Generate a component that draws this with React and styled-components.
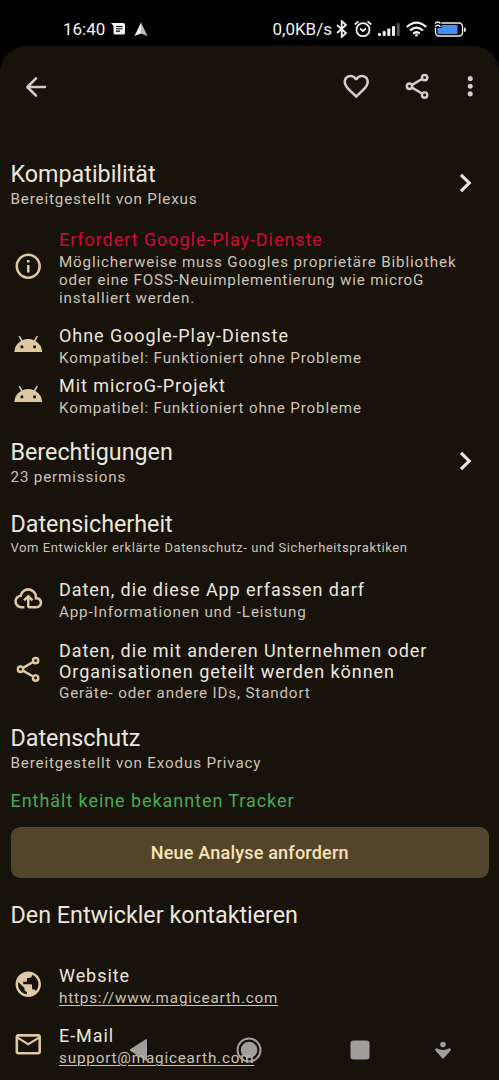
import React from 'react';
import styled, {createGlobalStyle} from 'styled-components';
import {
  MdAndroid,
  MdFavoriteBorder,
  MdInfoOutline,
  MdMailOutline,
  MdMoreVert,
  MdPublic,
} from 'react-icons/md';

const GlobalStyle = createGlobalStyle`
  body {
    margin: 0;
    background: #000;
    font-family: Roboto, 'Noto Sans', sans-serif;
  }
`;

const Screen = styled.div`
  position: relative;
  width: 499px;
  height: 1080px;
  overflow: hidden;
  background: #000;
`;

const StatusBar = styled.header`
  display: flex;
  align-items: center;
  justify-content: space-between;
  box-sizing: border-box;
  height: 46px;
  padding: 12px 32px 0 63px;
  color: #f2f2f2;
  font-size: 17px;
  line-height: 20px;
`;

const StatusGroup = styled.div`
  display: flex;
  align-items: center;
`;

const StatusText = styled.span`
  width: ${props => props.width}px;
  white-space: nowrap;
`;

const StatusIcon = styled.svg`
  display: block;
  margin-left: ${props => props.gap}px;
`;

const Sheet = styled.main`
  height: 1034px;
  border-radius: 26px 26px 0 0;
  background: #17130a;
  color: #ece6dc;
`;

const AppBar = styled.div`
  display: flex;
  align-items: center;
  height: 81px;
  padding: 0 13.5px 0 20.5px;
  color: #d8ccbe;
`;

const IconButton = styled.span`
  display: flex;
  margin-left: ${props => props.gap || 0}px;
`;

const Spacer = styled.div`
  flex: 1;
`;

const Content = styled.div`
  padding: 33px 10px 0 10.5px;
`;

const Section = styled.section`
  margin-bottom: ${props => props.gap}px;
`;

const SectionHeader = styled.div`
  display: flex;
  align-items: center;
  justify-content: space-between;
  padding-right: 16px;
`;

const SectionTitle = styled.h2`
  margin: 0;
  font-size: 23.3px;
  font-weight: 400;
  line-height: 28px;
  white-space: nowrap;
`;

const SectionSubtitle = styled.div`
  margin-top: 2px;
  color: #cdc3b6;
  font-size: ${props => (props.small ? 13 : 15.2)}px;
  line-height: ${props => (props.small ? 16 : 18)}px;
  letter-spacing: ${props => (props.small ? 0.58 : 0.84)}px;
  white-space: nowrap;
`;

const Row = styled.div`
  display: flex;
  align-items: center;
  margin-top: ${props => props.gap}px;
`;

const RowIcon = styled.div`
  display: flex;
  width: 31px;
  margin: 0 15.5px 3px 2px;
  color: #dfc8a4;
`;

const RowTitle = styled.div`
  color: ${props => props.color || 'inherit'};
  font-size: 18px;
  line-height: ${props => (props.multiline ? 21 : 22)}px;
  letter-spacing: 0.94px;
  white-space: pre;
`;

const RowText = styled.div`
  margin-top: 2px;
  color: #cdc3b6;
  font-size: 15.2px;
  line-height: 18px;
  letter-spacing: 0.84px;
  text-decoration: ${props => (props.link ? 'underline' : 'none')};
  text-decoration-thickness: 1px;
  text-underline-offset: 1.5px;
  white-space: pre;
`;

const TonalButton = styled.button`
  display: block;
  width: 100%;
  height: 51px;
  margin-top: 15px;
  padding: 0;
  border: 0;
  border-radius: 9px;
  background: #53452a;
  color: #f9e2b8;
  font-family: inherit;
  font-size: 18px;
  font-weight: 500;
  letter-spacing: 0.2px;
`;

const NavigationBar = styled.nav`
  position: absolute;
  left: 0;
  right: 0;
  bottom: 0;
  display: flex;
  align-items: center;
  height: 60px;
  padding-left: 129px;
  color: #b4b2ae;
  opacity: 0.88;
`;

const NavIcon = styled.svg`
  display: block;
  margin-right: ${props => props.gap}px;
`;

function BackArrow() {
  return (
    <svg width="30" height="30" viewBox="0 0 30 30" fill="none" stroke="currentColor" strokeWidth="2.6" strokeLinecap="round" strokeLinejoin="round">
      <path d="M24 15H7M15 6.3L6.3 15L15 23.7" />
    </svg>
  );
}

function ShareIcon() {
  return (
    <svg width="30.5" height="30.5" viewBox="0 0 24 24" fill="none" stroke="currentColor" strokeWidth="1.9">
      <circle cx="17.8" cy="5.2" r="2.1" />
      <circle cx="5.9" cy="12" r="2.1" />
      <circle cx="17.8" cy="18.9" r="2.1" />
      <path d="M7.9 10.9L15.8 6.3M7.9 13.1L15.8 17.7" />
    </svg>
  );
}

function CloudIcon() {
  return (
    <svg width="30.5" height="30.5" viewBox="0 -960 960 960" fill="currentColor">
      <path d="M260-160q-91 0-155.500-63T40-377q0-78 47-139t123-78q25-92 100-149t170-57q117 0 198.500 81.500T760-520q69 8 114.500 59.500T920-340q0 75-52.500 127.500T740-160H520q-33 0-56.500-23.500T440-240v-206l-64 62-56-56 160-160 160 160-56 56-64-62v206h220q42 0 71-29t29-71q0-42-29-71t-71-29h-60v-80q0-83-58.500-141.500T480-720q-83 0-141.500 58.500T280-520h-20q-58 0-99 41t-41 99q0 58 41 99t99 41h100v80H260Z" />
    </svg>
  );
}

function Chevron() {
  return (
    <svg width="14" height="23" viewBox="0 0 14 23" fill="none" stroke="currentColor" strokeWidth="3.1">
      <path d="M2 1.8L10.2 10L2 18.2" />
    </svg>
  );
}

function StatusIcons() {
  return (
    <>
      <StatusIcon gap={5} width="12" height="18" viewBox="0 0 12 18" fill="none" stroke="currentColor" strokeWidth="1.8">
        <path d="M1 5L10 13L5.7 17V1L10 5L1 13" />
      </StatusIcon>
      <StatusIcon gap={6} width="18" height="18" viewBox="0 0 18 18" fill="none" stroke="currentColor" strokeWidth="1.8">
        <circle cx="9" cy="9.7" r="6.5" />
        <path d="M.8 4.5L4.5 1.4M17.200 4.5L13.5 1.4M6 8.5L9 11L12 8.5" />
      </StatusIcon>
      <StatusIcon gap={6} width="22" height="18" viewBox="0 0 22 18" fill="currentColor">
        <rect x="0" y="13" width="3" height="3" rx="1" />
        <rect x="4.7" y="11" width="3" height="5" rx="1" />
        <rect x="9.3" y="8.5" width="3" height="7.5" rx="1" />
        <rect x="14" y="6" width="3" height="10" rx="1" />
        <rect x="18.7" y="3" width="3" height="13" rx="1" opacity="0.35" />
      </StatusIcon>
      <StatusIcon gap={6} width="21" height="18" viewBox="0 0 21 18" fill="none" stroke="currentColor" strokeWidth="2.3">
        <path d="M.8 7Q10.5-1.8 20.200 7M4 10.5Q10.5 4.7 17 10.5M7.2 13.6Q10.5 10.8 13.8 13.6" />
        <circle cx="10.5" cy="15.2" r="1.3" fill="currentColor" stroke="none" />
      </StatusIcon>
      <StatusIcon gap={7} width="33" height="18" viewBox="0 0 33 18">
        <rect x="1.5" y="3" width="27" height="13" rx="3.5" fill="none" stroke="currentColor" strokeWidth="1.4" />
        <rect x="3.5" y="5" width="20" height="9" rx="1" fill="#3f8ff5" />
        <path d="M30 7.5Q32 7.5 32 9.7Q32 12 30 12Z" fill="currentColor" />
        <path d="M0 0H7.500V8H0Z" fill="#000" />
        <path d="M1 3.500Q3.700 .5 6.500 3.500M1 6.800Q3.700 3.800 6.500 6.800" fill="none" stroke="currentColor" strokeWidth="1.5" />
      </StatusIcon>
    </>
  );
}

const InfoRow = ({icon, title, text, gap, color, multiline, link}) => (
  <Row gap={gap}>
    <RowIcon>{icon}</RowIcon>
    <div>
      <RowTitle color={color} multiline={multiline}>
        {title}
      </RowTitle>
      <RowText link={link}>{text}</RowText>
    </div>
  </Row>
);

const App = () => (
  <Screen>
    <GlobalStyle />
    <StatusBar>
      <StatusGroup>
        <StatusText width={43}>16:40</StatusText>
        <StatusIcon gap={5} width="15" height="14" viewBox="0 0 15 14">
          <path d="M0 1H12.500Q14 1 14 2.5V11Q14 12.5 12.5 12.5H4Q2.5 12.5 2.5 11V4Z" fill="currentColor" />
          <path d="M5 4.5H11.5M5 6.8H11.5M5 9.1H9" stroke="#000" strokeWidth="1.1" />
        </StatusIcon>
        <StatusIcon gap={8} width="14" height="15" viewBox="0 0 14 15">
          <path d="M7 .5L.5 14L7 11.5Z" fill="#f2f2f2" />
          <path d="M7 .5L13.5 14L7 11.5Z" fill="#bdbdbd" />
        </StatusIcon>
      </StatusGroup>
      <StatusGroup>
        <StatusText width={58.5}>0,0KB/s</StatusText>
        <StatusIcons />
      </StatusGroup>
    </StatusBar>

    <Sheet>
      <AppBar>
        <BackArrow />
        <Spacer />
        <IconButton>
          <MdFavoriteBorder size={30.5} />
        </IconButton>
        <IconButton gap={30.5}>
          <ShareIcon />
        </IconButton>
        <IconButton gap={22.5}>
          <MdMoreVert size={30.5} />
        </IconButton>
      </AppBar>

      <Content>
        <Section gap={21}>
          <SectionHeader>
            <div>
              <SectionTitle>Kompatibilität</SectionTitle>
              <SectionSubtitle>Bereitgestellt von Plexus</SectionSubtitle>
            </div>
            <Chevron />
          </SectionHeader>
          <InfoRow
            gap={21}
            color="#cf0b3a"
            icon={<MdInfoOutline size={30.5} />}
            title="Erfordert Google-Play-Dienste"
            text={
              'Möglicherweise muss Googles proprietäre Bibliothek\n' +
              'oder eine FOSS-Neuimplementierung wie microG\n' +
              'installiert werden.'
            }
          />
          <InfoRow
            gap={18}
            icon={<MdAndroid size={30.5} />}
            title="Ohne Google-Play-Dienste"
            text="Kompatibel: Funktioniert ohne Probleme"
          />
          <InfoRow
            gap={8}
            icon={<MdAndroid size={30.5} />}
            title="Mit microG-Projekt"
            text="Kompatibel: Funktioniert ohne Probleme"
          />
        </Section>

        <Section gap={24}>
          <SectionHeader>
            <div>
              <SectionTitle>Berechtigungen</SectionTitle>
              <SectionSubtitle>23 permissions</SectionSubtitle>
            </div>
            <Chevron />
          </SectionHeader>
        </Section>

        <Section gap={22}>
          <SectionTitle>Datensicherheit</SectionTitle>
          <SectionSubtitle small>
            Vom Entwickler erklärte Datenschutz- und Sicherheitspraktiken
          </SectionSubtitle>
          <InfoRow
            gap={23}
            icon={<CloudIcon />}
            title="Daten, die diese App erfassen darf"
            text="App-Informationen und -Leistung"
          />
          <InfoRow
            gap={19}
            multiline
            icon={<ShareIcon />}
            title={
              'Daten, die mit anderen Unternehmen oder\n' +
              'Organisationen geteilt werden können'
            }
            text="Geräte- oder andere IDs, Standort"
          />
        </Section>

        <Section gap={23}>
          <SectionTitle>Datenschutz</SectionTitle>
          <SectionSubtitle>Bereitgestellt von Exodus Privacy</SectionSubtitle>
          <Row gap={18}>
            <RowTitle color="#4bab4e">Enthält keine bekannten Tracker</RowTitle>
          </Row>
          <TonalButton>Neue Analyse anfordern</TonalButton>
        </Section>

        <Section gap={0}>
          <SectionTitle>Den Entwickler kontaktieren</SectionTitle>
          <InfoRow
            gap={36}
            link
            icon={<MdPublic size={30.5} />}
            title="Website"
            text="https://www.magicearth.com"
          />
          <InfoRow
            gap={18}
            link
            icon={<MdMailOutline size={30.5} />}
            title="E-Mail"
            text="support@magicearth.com"
          />
        </Section>
      </Content>
    </Sheet>

    <NavigationBar>
      <NavIcon gap={88} width="19" height="24" viewBox="0 0 19 24" fill="currentColor">
        <path d="M18 2V22Q18 23.5 16.5 22.5L1.5 13Q0 12 1.5 11L16.5 1.5Q18 .5 18 2Z" />
      </NavIcon>
      <NavIcon gap={88} width="26" height="26" viewBox="0 0 26 26">
        <circle cx="13" cy="13" r="11.5" fill="none" stroke="currentColor" strokeWidth="2" />
        <circle cx="13" cy="13" r="8.3" fill="currentColor" />
      </NavIcon>
      <NavIcon gap={65} width="20" height="20" viewBox="0 0 20 20" fill="currentColor">
        <rect x=".5" y=".5" width="19" height="19" rx="3" />
      </NavIcon>
      <NavIcon gap={0} width="16" height="18" viewBox="0 0 16 18" fill="currentColor">
        <circle cx="8" cy="3.5" r="2.8" />
        <path d="M1.5 7.2Q5 9 8 9T14.5 7.2Q17 8 15 10.300L9 17Q8 18 7 17L1 10.300Q-1 8 1.5 7.2Z" />
      </NavIcon>
    </NavigationBar>
  </Screen>
);

export default App;
